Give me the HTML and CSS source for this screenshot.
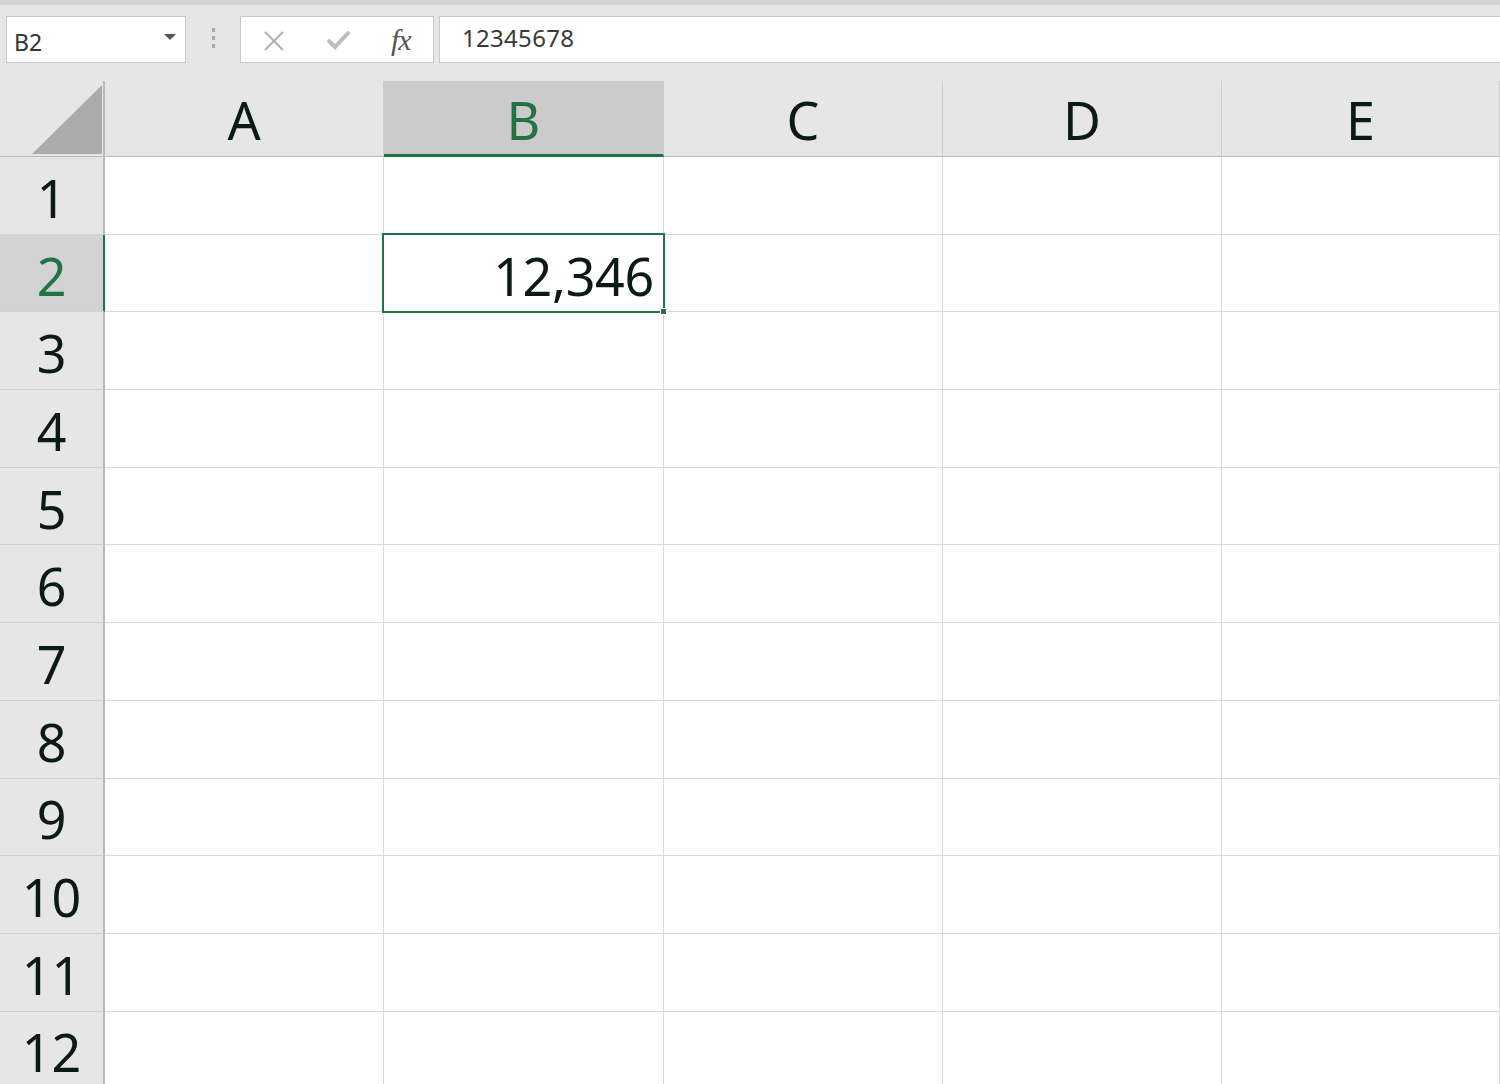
FILE: index.html
```html
<!DOCTYPE html>
<html lang="ja">
  <head>
    <meta charset="UTF-8" />
    <meta name="viewport" content="width=device-width, initial-scale=1.0" />
    <title>Book1 - Excel</title>
    <link rel="stylesheet" href="styles.css">
  </head>
  <body>
    <div class="app">
      <div class="top-strip"></div>
      <!-- 数式バー -->
      <div class="formula-bar">
        <div class="name-box">
          <span>B2</span>
          <span class="drop"></span>
        </div>
        <div class="grip">
          <i></i><i></i><i></i>
        </div>
        <div class="fx-box">
          <svg class="btn-x" width="22" height="22" viewBox="0 0 22 22">
            <path d="M2 2 L20 20 M20 2 L2 20" stroke="#b4b4b4" stroke-width="2.2" fill="none" />
          </svg>
          <svg class="btn-ok" width="26" height="22" viewBox="0 0 26 22">
            <path d="M2 11 L9 18 L23 3" stroke="#bdbdbd" stroke-width="4" fill="none" />
          </svg>
          <span class="fx">fx</span>
        </div>
        <div class="formula-input">12345678</div>
      </div>

      <div class="sheet">
        <div class="corner"><div class="tri"></div></div>
        <div class="col-head">A</div>
        <div class="col-head active">B</div>
        <div class="col-head">C</div>
        <div class="col-head">D</div>
        <div class="col-head">E</div>

        <div class="row-head">1</div>
        <div class="cell"></div><div class="cell"></div><div class="cell"></div><div class="cell"></div><div class="cell"></div>

        <div class="row-head active">2</div>
        <div class="cell"></div>
        <div class="cell selected">12,346<span class="handle"></span></div>
        <div class="cell"></div><div class="cell"></div><div class="cell"></div>

        <div class="row-head">3</div>
        <div class="cell"></div><div class="cell"></div><div class="cell"></div><div class="cell"></div><div class="cell"></div>
        <div class="row-head">4</div>
        <div class="cell"></div><div class="cell"></div><div class="cell"></div><div class="cell"></div><div class="cell"></div>
        <div class="row-head">5</div>
        <div class="cell"></div><div class="cell"></div><div class="cell"></div><div class="cell"></div><div class="cell"></div>
        <div class="row-head">6</div>
        <div class="cell"></div><div class="cell"></div><div class="cell"></div><div class="cell"></div><div class="cell"></div>
        <div class="row-head">7</div>
        <div class="cell"></div><div class="cell"></div><div class="cell"></div><div class="cell"></div><div class="cell"></div>
        <div class="row-head">8</div>
        <div class="cell"></div><div class="cell"></div><div class="cell"></div><div class="cell"></div><div class="cell"></div>
        <div class="row-head">9</div>
        <div class="cell"></div><div class="cell"></div><div class="cell"></div><div class="cell"></div><div class="cell"></div>
        <div class="row-head">10</div>
        <div class="cell"></div><div class="cell"></div><div class="cell"></div><div class="cell"></div><div class="cell"></div>
        <div class="row-head">11</div>
        <div class="cell"></div><div class="cell"></div><div class="cell"></div><div class="cell"></div><div class="cell"></div>
        <div class="row-head">12</div>
        <div class="cell"></div><div class="cell"></div><div class="cell"></div><div class="cell"></div><div class="cell"></div>
      </div>
    </div>
  </body>
</html>
```

FILE: styles.css
```css
* {
  margin: 0;
  padding: 0;
  box-sizing: border-box;
}
html,
body {
  height: 100%;
  overflow: hidden;
}
body {
  background-color: #e6e6e6;
  font-family: "Noto Sans", "Noto Sans CJK JP", sans-serif;
  color: #0c1a14;
}
.top-strip {
  height: 5px;
  background-color: #d2d2d2;
}

/* 数式バー */
.formula-bar {
  display: flex;
  height: 58px;
  padding: 11px 0 0 6px;
}
.name-box {
  width: 180px;
  height: 47px;
  background-color: #fff;
  border: 1px solid #c8c8c8;
  display: flex;
  align-items: center;
  justify-content: space-between;
  padding: 0 9px 0 7px;
  font-size: 23px;
  color: #333;
}
.name-box span:first-child {
  margin-top: 4px;
}
.drop {
  width: 0;
  height: 0;
  border-left: 6px solid transparent;
  border-right: 6px solid transparent;
  border-top: 6px solid #555;
  margin-bottom: 6px;
}
.grip {
  width: 54px;
  display: flex;
  flex-direction: column;
  align-items: center;
  justify-content: center;
  gap: 4px;
  padding-bottom: 4px;
}
.grip i {
  width: 3px;
  height: 4px;
  background-color: #a8a8a8;
}
.fx-box {
  width: 194px;
  height: 47px;
  background-color: #fff;
  border: 1px solid #c8c8c8;
  display: flex;
  align-items: center;
  padding-left: 22px;
}
.btn-x {
  margin-top: 2px;
}
.btn-ok {
  margin-left: 41px;
  margin-top: 1px;
}
.fx {
  margin-left: 39px;
  font-family: "Liberation Serif", serif;
  font-style: italic;
  font-size: 30px;
  color: #555;
  letter-spacing: -1px;
}
.formula-input {
  flex: 1;
  height: 47px;
  margin-left: 5px;
  background-color: #fff;
  border: 1px solid #c8c8c8;
  border-right: none;
  padding: 3px 0 0 22px;
  font-size: 24px;
  color: #3a3a3a;
  letter-spacing: 0.3px;
  line-height: 36px;
}

/* シート */
.sheet {
  margin-top: 18px;
  display: grid;
  grid-template-columns: 105px 279px 280px 279px 279px 278px;
  grid-template-rows: 76px repeat(12, 77.7px);
}
.corner {
  position: relative;
  background-color: #e6e6e6;
  border-right: 2px solid #b9b9b9;
  border-bottom: 1px solid #b9b9b9;
}
.tri {
  position: absolute;
  right: 1px;
  bottom: 2px;
  width: 70px;
  height: 69px;
  background-color: #ababab;
  clip-path: polygon(100% 0, 100% 100%, 0 100%);
}
.col-head {
  background-color: #e6e6e6;
  border-right: 1px solid #cdcdcd;
  border-bottom: 1px solid #b9b9b9;
  display: flex;
  align-items: center;
  justify-content: center;
  font-size: 52px;
  padding-top: 2px;
}
.col-head.active {
  background-color: #cbcbcb;
  color: #217346;
  border-bottom: 3px solid #217346;
  padding-top: 4px;
}
.row-head {
  background-color: #e6e6e6;
  border-right: 2px solid #b9b9b9;
  border-bottom: 1px solid #d0d0d0;
  display: flex;
  align-items: center;
  justify-content: center;
  font-size: 52px;
  padding-top: 4px;
}
.row-head.active {
  background-color: #d2d2d2;
  color: #217346;
  border-right: 2px solid #217346;
}
.cell {
  background-color: #fff;
  border-right: 1px solid #d9d9d9;
  border-bottom: 1px solid #d9d9d9;
}
.cell.selected {
  position: relative;
  margin: -2px -1px -1px -2px;
  border: 2px solid #217346;
  display: flex;
  align-items: center;
  justify-content: flex-end;
  padding: 4px 9px 0 0;
  font-size: 52px;
  letter-spacing: -0.3px;
}
.handle {
  position: absolute;
  right: -4px;
  bottom: -4px;
  width: 7px;
  height: 7px;
  background-color: #217346;
  border: 1px solid #fff;
}
```
